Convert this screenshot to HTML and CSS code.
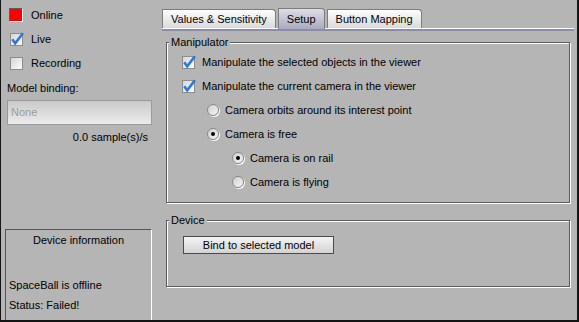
FILE: index.html
```html
<!DOCTYPE html>
<html lang="en">
<head>
    <meta charset="UTF-8">
    <title>SpaceBall Device</title>
    <link rel="stylesheet" href="styles.css">
</head>
<body>
    <div class="window">
        <!-- Device status column -->
        <aside class="side">
            <div class="row"><span class="led"></span>Online</div>
            <div class="row side-check">
                <svg class="check" viewBox="0 0 13 13"><rect x="0.5" y="0.5" width="12" height="12" fill="url(#boxfill)" stroke="#8c8c8c"/><path d="M2.3 6.3 L5.2 10.4 L12.9 0.2" fill="none" stroke="#2d78d8" stroke-width="2.6"/></svg>
                Live
            </div>
            <div class="row side-check"><span class="box"></span>Recording</div>
            <div class="caption">Model binding:</div>
            <div class="combo">None</div>
            <div class="rate">0.0 sample(s)/s</div>
            <div class="info">
                <div class="info-title">Device information</div>
                <div class="info-line first">SpaceBall is offline</div>
                <div class="info-line">Status: Failed!</div>
            </div>
        </aside>

        <main class="main">
            <div class="tabs">
                <div class="tab">Values &amp; Sensitivity</div>
                <div class="tab active">Setup</div>
                <div class="tab">Button Mapping</div>
            </div>

            <fieldset class="group manip">
                <legend>Manipulator</legend>
                <div class="rows">
                    <div class="opt">
                        <svg class="check" viewBox="0 0 13 13"><rect x="0.5" y="0.5" width="12" height="12" fill="url(#boxfill)" stroke="#8c8c8c"/><path d="M2.3 6.3 L5.2 10.4 L12.9 0.2" fill="none" stroke="#2d78d8" stroke-width="2.6"/></svg>
                        Manipulate the selected objects in the viewer
                    </div>
                    <div class="opt">
                        <svg class="check" viewBox="0 0 13 13"><rect x="0.5" y="0.5" width="12" height="12" fill="url(#boxfill)" stroke="#8c8c8c"/><path d="M2.3 6.3 L5.2 10.4 L12.9 0.2" fill="none" stroke="#2d78d8" stroke-width="2.6"/></svg>
                        Manipulate the current camera in the viewer
                    </div>
                    <div class="opt level1"><span class="radio"></span>Camera orbits around its interest point</div>
                    <div class="opt level1"><span class="radio on"></span>Camera is free</div>
                    <div class="opt level2"><span class="radio on"></span>Camera is on rail</div>
                    <div class="opt level2"><span class="radio"></span>Camera is flying</div>
                </div>
            </fieldset>

            <fieldset class="group device">
                <legend>Device</legend>
                <div class="rows">
                    <button class="btn">Bind to selected model</button>
                </div>
            </fieldset>
        </main>
    </div>

    <svg width="0" height="0" class="defs">
        <defs>
            <linearGradient id="boxfill" x1="0" y1="0" x2="1" y2="1">
                <stop offset="0" stop-color="#d6d6d6"/>
                <stop offset="1" stop-color="#fbfbfb"/>
            </linearGradient>
        </defs>
    </svg>
</body>
</html>
```

FILE: styles.css
```css
body {
    margin: 0;
    background-color: #b5b5b5;
    font-family: "Liberation Sans", Arial, sans-serif;
    font-size: 11px;
    color: #000;
}
.defs {
    position: absolute;
}
.window {
    display: flex;
    width: 579px;
    height: 322px;
    box-sizing: border-box;
    border-style: solid;
    border-color: #141414;
    border-width: 0 2px 2px 1px;
    background-color: #b5b5b5;
}

/* left column */
.side {
    width: 154px;
    display: flex;
    flex-direction: column;
    padding-top: 3px;
}
.row {
    height: 24px;
    display: flex;
    align-items: center;
    padding-left: 8px;
}
.led {
    width: 14px;
    height: 14px;
    box-sizing: border-box;
    background-color: #ff0000;
    border-top: 1px solid #5c5c5c;
    border-left: 1px solid #5c5c5c;
    border-right: 1px solid #fff;
    border-bottom: 1px solid #fff;
    margin-right: 8px;
}
.side-check {
    padding-left: 9px;
}
.side-check .check,
.side-check .box {
    margin-right: 8px;
}
.check {
    width: 13px;
    height: 13px;
    overflow: visible;
    flex-shrink: 0;
}
.box {
    width: 13px;
    height: 13px;
    box-sizing: border-box;
    border: 1px solid #8c8c8c;
    background: linear-gradient(135deg, #d6d6d6, #fbfbfb);
}
.caption {
    margin-top: 6px;
    padding-left: 6px;
    line-height: 14px;
}
.combo {
    margin: 5px 0 0 6px;
    width: 145px;
    height: 25px;
    box-sizing: border-box;
    border: 1px solid #9a9a9a;
    background: linear-gradient(#c9c9c9, #ececec);
    color: #9c9c9c;
    padding-left: 3px;
    line-height: 23px;
}
.rate {
    margin-top: 5px;
    line-height: 14px;
    text-align: right;
    padding-right: 7px;
}
.info {
    margin: auto 0 0 4px;
    width: 147px;
    height: 91px;
    box-sizing: border-box;
    border-top: 1px solid #555;
    border-left: 1px solid #555;
    border-right: 1px solid #fff;
    padding-top: 3px;
}
.info-title {
    text-align: center;
    line-height: 14px;
}
.info-line {
    line-height: 14px;
    padding-left: 3px;
    margin-top: 6px;
}
.info-line.first {
    margin-top: 31px;
}

/* right side: tabs + groups */
.main {
    flex: 1;
    padding-top: 8px;
}
.tabs {
    display: flex;
    align-items: flex-end;
    gap: 2px;
    margin: 0 3px 0 7px;
    height: 20px;
    border-bottom: 2px solid #8c8ca6;
    box-shadow: inset 0 -1px 0 #fff;
    padding-bottom: 1px;
}
.tab {
    height: 19px;
    box-sizing: border-box;
    padding: 0 8px;
    line-height: 18px;
    border: 1px solid #7c7c7c;
    border-bottom: none;
    border-top-right-radius: 4px;
    background: linear-gradient(#fdfdfd, #dadada);
}
.tab.active {
    height: 21px;
    margin-bottom: -1px;
    line-height: 20px;
    background: linear-gradient(#dedee8, #a9a9bf);
}
.group {
    margin: 5px 7px 0 11px;
    padding: 0;
    border: 1px solid #5a5a5a;
    box-shadow: 1px 1px 0 #fff, inset 1px 1px 0 #fff;
}
.group legend {
    margin-left: 2px;
    padding: 0 2px;
    line-height: 13px;
    background-color: #b5b5b5;
}
.manip .rows {
    padding: 1px 0 8px 15px;
}
.device {
    margin-top: 11px;
}
.device .rows {
    padding: 9px 0 32px 16px;
}
.opt {
    height: 24px;
    display: flex;
    align-items: center;
}
.opt .check {
    margin-right: 7px;
}
.level1 {
    padding-left: 25px;
}
.level2 {
    padding-left: 50px;
}
.radio {
    position: relative;
    width: 12px;
    height: 12px;
    box-sizing: border-box;
    border-radius: 50%;
    border: 1px solid #8a8a8a;
    background: linear-gradient(135deg, #cfcfcf, #f6f6f6);
    box-shadow: 1px 1px 0 #fff;
    margin-right: 6px;
}
.radio.on::after {
    content: "";
    position: absolute;
    left: 3px;
    top: 3px;
    width: 4px;
    height: 4px;
    border-radius: 50%;
    background-color: #000;
}
.btn {
    display: block;
    width: 151px;
    height: 18px;
    padding: 0;
    border: 1px solid #4a4a4a;
    background: linear-gradient(#f4f4f4, #d3d3d3);
    font-family: "Liberation Sans", Arial, sans-serif;
    font-size: 11px;
    color: #000;
}
```
